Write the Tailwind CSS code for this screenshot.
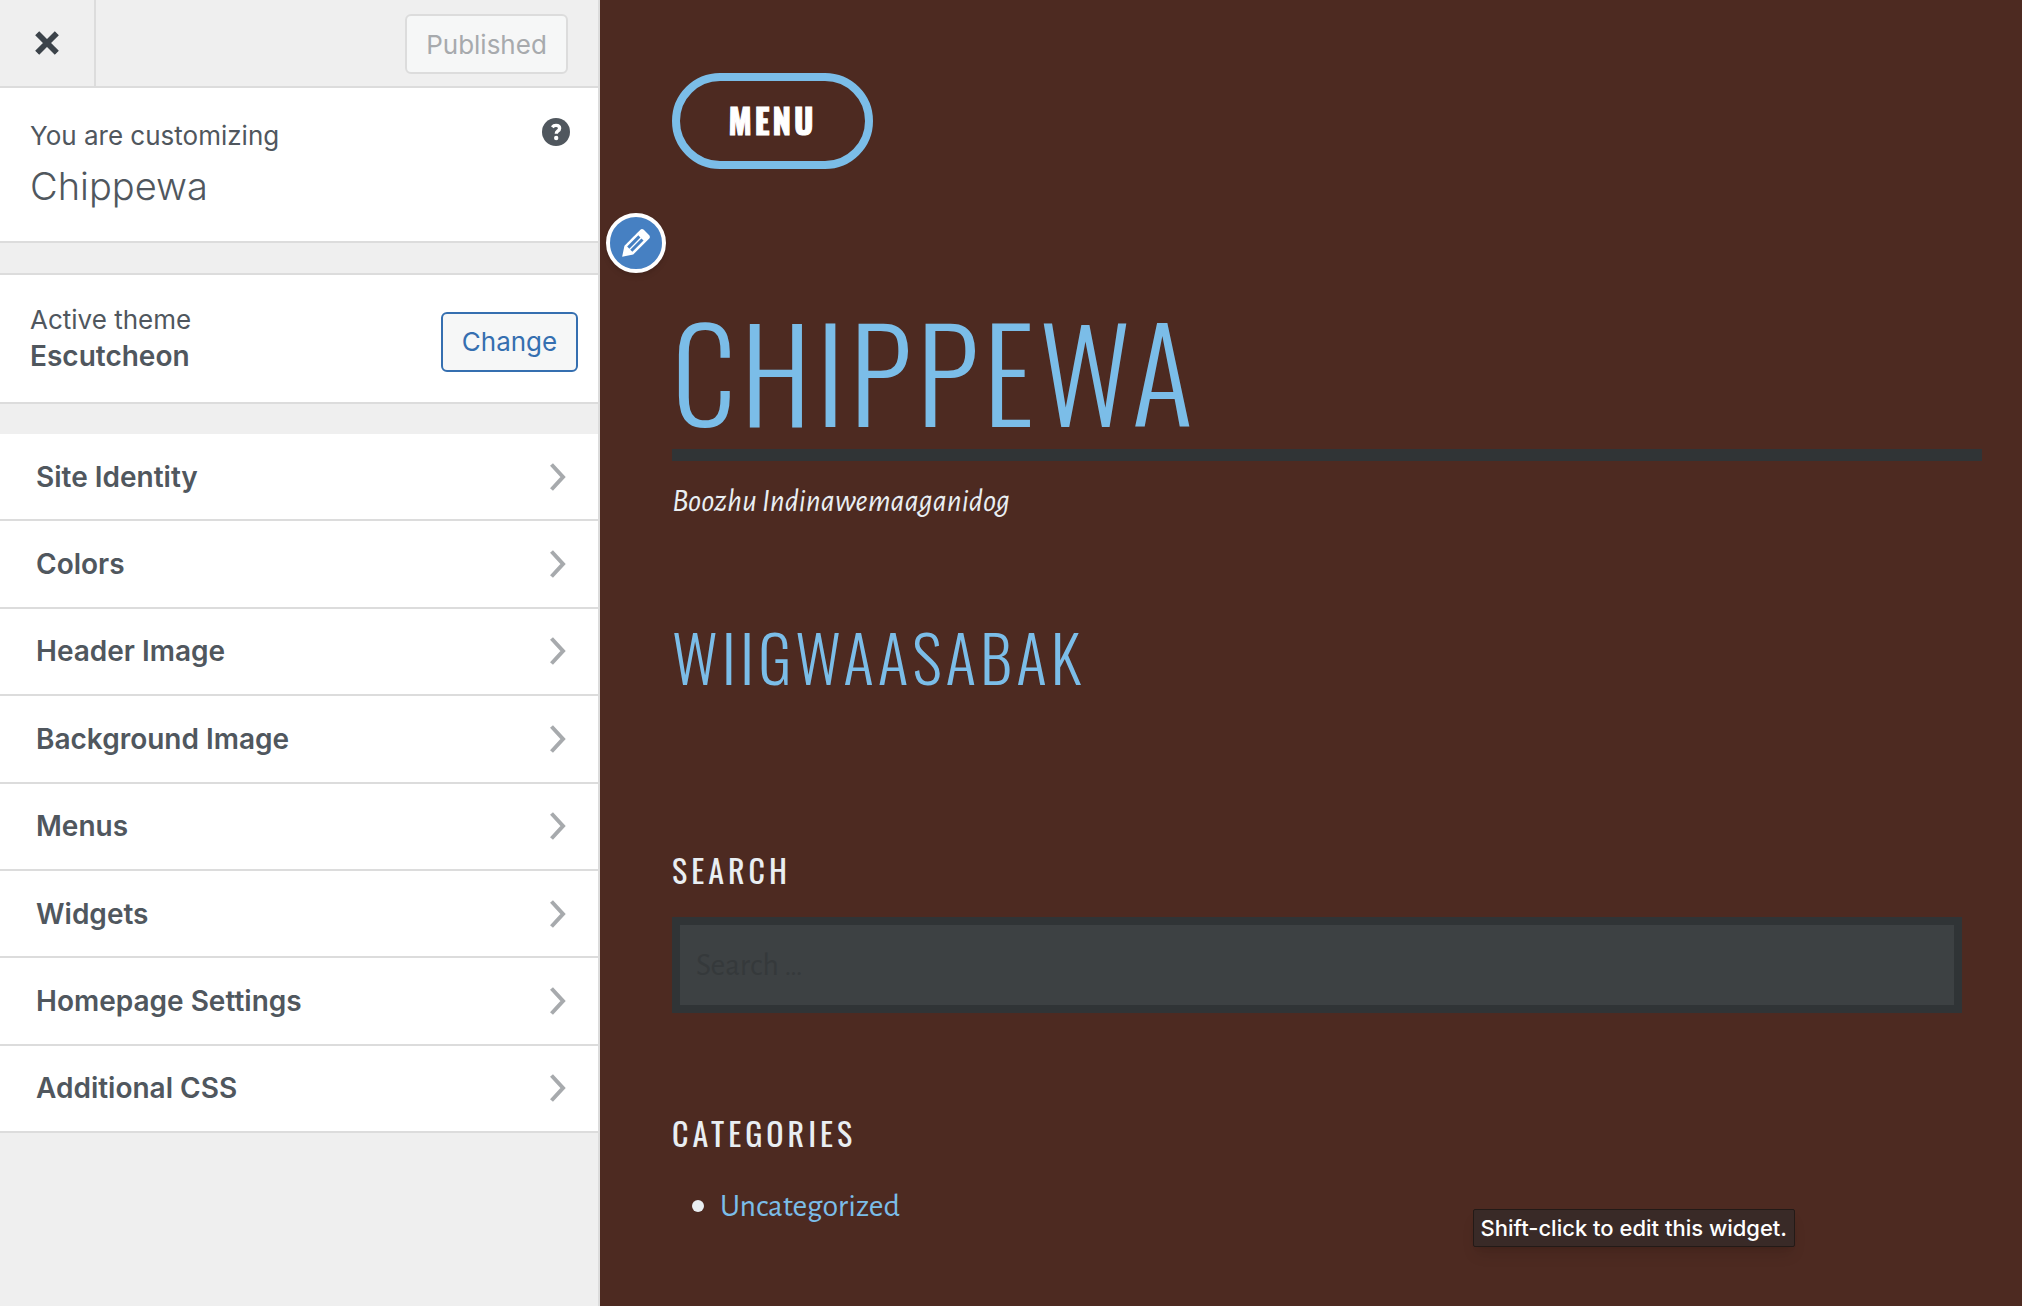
<!DOCTYPE html>
<html lang="en">
<head>
<meta charset="utf-8">
<meta name="viewport" content="width=device-width, initial-scale=1">
<title>Customize: Chippewa</title>
<script src="https://cdn.jsdelivr.net/npm/@tailwindcss/browser@4"></script>
</head>
<body class="flex min-h-screen bg-[#4d2a21] font-['Inter',sans-serif] text-[#50575e]">

<aside class="flex w-[600px] shrink-0 flex-col border-r-2 border-[#dcdcdc] bg-[#efefef]">
  <header class="flex h-[88px] items-center justify-between border-b-2 border-[#dcdcdc] pr-[30px]">
    <button type="button" aria-label="Close" class="flex h-full w-24 items-center justify-center border-r-2 border-[#dcdcdc] text-[#3c434a]">
      <svg class="size-11" viewBox="0 0 20 20" fill="currentColor"><path d="M14.95 6.46L11.41 10l3.54 3.54-1.41 1.41L10 11.42l-3.53 3.53-1.42-1.42L8.58 10 5.05 6.47l1.42-1.42L10 8.58l3.54-3.53z" stroke="currentColor" stroke-width="0.6"/></svg>
    </button>
    <button type="button" disabled class="mt-[2px] h-[60px] w-[163px] rounded-md border-2 border-[#dcdcdc] bg-[#f6f7f7] text-[26px] text-[#a7aaad]">Published</button>
  </header>

  <section class="flex h-[155px] items-start justify-between border-b-2 border-[#dcdcdc] bg-white pt-7 pr-[26px] pl-[30px]">
    <div>
      <p class="text-[26px] leading-10">You are customizing</p>
      <h1 class="text-[38px] leading-[60px] font-light">Chippewa</h1>
    </div>
    <button type="button" aria-label="Help">
      <svg class="size-8" viewBox="0 0 32 32"><circle cx="16" cy="16" r="14" fill="#50575e"/><path d="M12.300 11.200c.9-1.200 2.100-1.800 3.700-1.800 2.100 0 3.600 1.100 3.600 2.900 0 1.500-.9 2.200-1.900 2.900-1 .7-1.400 1.200-1.400 2.500" fill="none" stroke="#fff" stroke-width="3.400"/><circle cx="16.200" cy="22" r="2.200" fill="#fff"/></svg>
    </button>
  </section>

  <section class="mt-[30px] flex h-[131px] items-center justify-between border-y-2 border-[#dcdcdc] bg-white pr-5 pb-[2px] pl-[30px]">
    <div>
      <p class="text-[26px] leading-9">Active theme</p>
      <h2 class="text-[28px] leading-9 font-semibold">Escutcheon</h2>
    </div>
    <button type="button" class="mt-2 h-[60px] w-[137px] rounded-md border-2 border-[#356fb0] bg-[#f6f7f7] text-[26px] text-[#356fb0]">Change</button>
  </section>

  <nav class="mt-[30px] grid h-[699px] auto-rows-fr bg-white text-[28px] font-semibold">
    <a href="#" class="flex items-center justify-between border-b-2 border-[#dcdcdc] pr-8 pl-9">Site Identity<svg class="h-7 w-4" viewBox="0 0 16 28" fill="none" stroke="#a7aaad" stroke-width="4"><path d="M1.500 1.500L13 14 1.500 26.500"/></svg></a>
    <a href="#" class="flex items-center justify-between border-b-2 border-[#dcdcdc] pr-8 pl-9">Colors<svg class="h-7 w-4" viewBox="0 0 16 28" fill="none" stroke="#a7aaad" stroke-width="4"><path d="M1.500 1.500L13 14 1.500 26.500"/></svg></a>
    <a href="#" class="flex items-center justify-between border-b-2 border-[#dcdcdc] pr-8 pl-9">Header Image<svg class="h-7 w-4" viewBox="0 0 16 28" fill="none" stroke="#a7aaad" stroke-width="4"><path d="M1.500 1.500L13 14 1.500 26.500"/></svg></a>
    <a href="#" class="flex items-center justify-between border-b-2 border-[#dcdcdc] pr-8 pl-9">Background Image<svg class="h-7 w-4" viewBox="0 0 16 28" fill="none" stroke="#a7aaad" stroke-width="4"><path d="M1.500 1.500L13 14 1.500 26.500"/></svg></a>
    <a href="#" class="flex items-center justify-between border-b-2 border-[#dcdcdc] pr-8 pl-9">Menus<svg class="h-7 w-4" viewBox="0 0 16 28" fill="none" stroke="#a7aaad" stroke-width="4"><path d="M1.500 1.500L13 14 1.500 26.500"/></svg></a>
    <a href="#" class="flex items-center justify-between border-b-2 border-[#dcdcdc] pr-8 pl-9">Widgets<svg class="h-7 w-4" viewBox="0 0 16 28" fill="none" stroke="#a7aaad" stroke-width="4"><path d="M1.500 1.500L13 14 1.500 26.500"/></svg></a>
    <a href="#" class="flex items-center justify-between border-b-2 border-[#dcdcdc] pr-8 pl-9">Homepage Settings<svg class="h-7 w-4" viewBox="0 0 16 28" fill="none" stroke="#a7aaad" stroke-width="4"><path d="M1.500 1.500L13 14 1.500 26.500"/></svg></a>
    <a href="#" class="flex items-center justify-between border-b-2 border-[#dcdcdc] pr-8 pl-9">Additional CSS<svg class="h-7 w-4" viewBox="0 0 16 28" fill="none" stroke="#a7aaad" stroke-width="4"><path d="M1.500 1.500L13 14 1.500 26.500"/></svg></a>
  </nav>
</aside>

<main class="relative min-w-0 flex-1 pt-[73px] pr-10 pl-[72px] font-['Alegreya_Sans','Lato',sans-serif] text-[#e9eef2]">
  <button type="button" class="flex h-24 w-[201px] items-center justify-center rounded-full border-8 border-[#7bbde8] font-['Oswald',sans-serif] text-[33px] font-bold tracking-[3px] text-white [-webkit-text-stroke:1px_white]">MENU</button>

  <button type="button" aria-label="Edit site title" class="absolute top-[213px] left-[6px] flex size-[60px] items-center justify-center rounded-full border-4 border-white bg-[#4680c2] shadow-md">
    <svg class="size-10" viewBox="0 0 20 20" fill="#fff"><path d="M13.890 3.390l2.710 2.720c.46.46.42 1.240.03 1.640l-8.010 8.020-5.560 1.160 1.160-5.580s7.600-7.630 7.990-8.030c.39-.39 1.220-.39 1.680.07zm-2.730 2.790l-5.590 5.610 1.110 1.110 5.540-5.650zm-2.970 8.230l5.580-5.600-1.070-1.080-5.590 5.600z"/></svg>
  </button>

  <h1 class="mt-30 border-b-12 border-[#303436] font-['Oswald',sans-serif] text-[128px] leading-40 font-light tracking-[5px] text-[#7bbde8]"><a href="#">CHIPPEWA</a></h1>
  <p class="mt-5 text-[32px] leading-10 italic">Boozhu Indinawemaaganidog</p>

  <h2 class="mt-[89px] font-['Oswald',sans-serif] text-[64px] leading-[92px] font-light tracking-[4px] text-[#7bbde8]"><a href="#">WIIGWAASABAK</a></h2>

  <section class="mt-[144px] pr-5">
    <h3 class="font-['Oswald',sans-serif] text-[32px] leading-12 tracking-[4px]"><label for="s">SEARCH</label></h3>
    <input id="s" type="search" placeholder="Search …" class="mt-[23px] block h-24 w-full border-8 border-[#303436] bg-[#3d4143] px-4 text-[32px] placeholder:text-[#35393b]">
  </section>

  <section class="mt-[96px]">
    <h3 class="font-['Oswald',sans-serif] text-[32px] leading-12 tracking-[4px]">CATEGORIES</h3>
    <ul class="mt-[25px] pl-5 text-[32px] leading-12">
      <li class="flex items-center gap-4"><span class="size-3 rounded-full bg-[#e9eef2]"></span><a href="#" class="text-[#7bbde8]">Uncategorized</a></li>
    </ul>
  </section>

  <div role="tooltip" class="absolute top-[1209px] right-[227px] flex h-[38px] items-center rounded-xs border border-[#231a17] bg-[#392a27] px-[7px] font-['Inter',sans-serif] text-[22px] font-medium whitespace-nowrap text-white shadow-lg">Shift-click to edit this widget.</div>
</main>
</body>
</html>
